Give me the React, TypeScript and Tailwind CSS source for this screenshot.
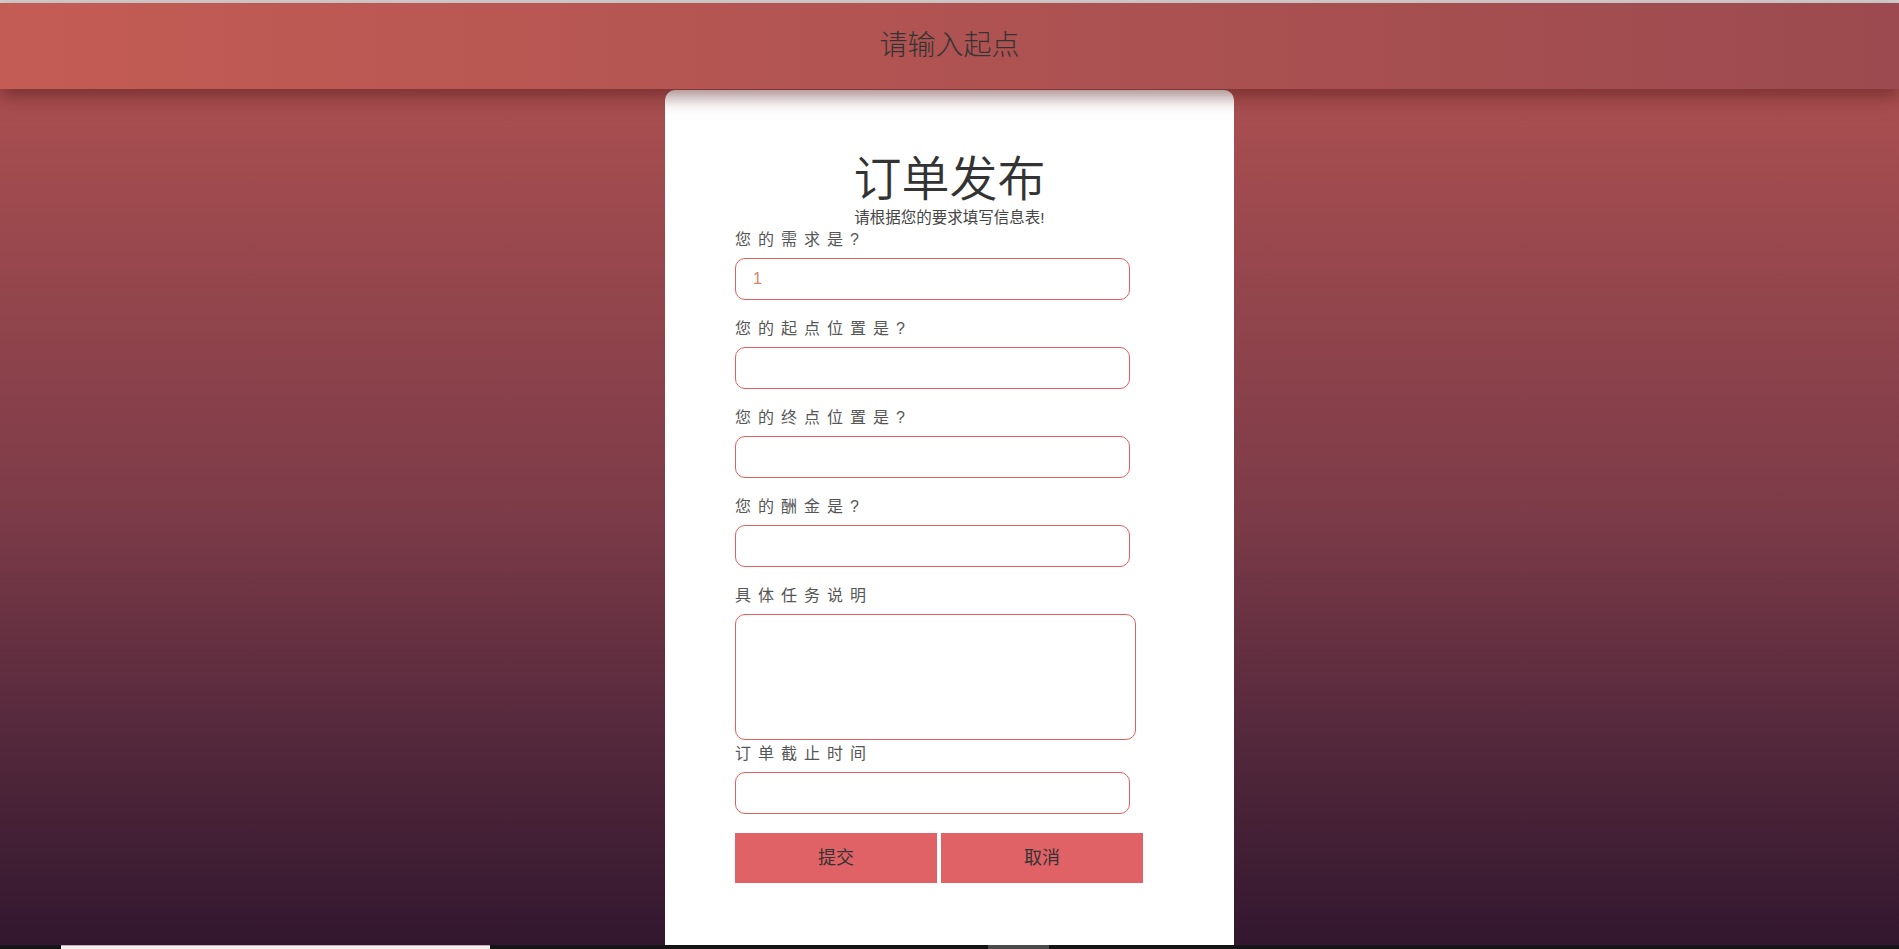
import React, { useState } from 'react';

const fontStack = { fontFamily: '"Liberation Sans", "Noto Sans CJK SC", "Noto Sans", sans-serif' };

const fields = [
  { label: '您的需求是?', value: '1' },
  { label: '您的起点位置是?', value: '' },
  { label: '您的终点位置是?', value: '' },
  { label: '您的酬金是?', value: '' },
];

const Label: React.FC<{ text: string; className?: string }> = ({ text, className = '' }) => (
  <label className={`block h-[24px] leading-[24px] text-[16px] tracking-[7px] text-[#555] ${className}`}>
    {text}
  </label>
);

const App: React.FC = () => {
  const [values, setValues] = useState(fields.map((f) => f.value));
  const [desc, setDesc] = useState('');
  const [deadline, setDeadline] = useState('');

  return (
    <div className="h-[949px] w-full flex flex-col overflow-hidden" style={fontStack}>
      <div className="h-[3px] bg-[#d4d0d0]" />

      <header className="relative z-10 h-[86px] flex items-center justify-center bg-gradient-to-r from-[#c35c54] to-[#9c4a4f] shadow-[0_8px_16px_rgba(80,20,20,0.5)]">
        <h1 className="text-[28px] font-light text-[#333]">请输入起点</h1>
      </header>

      <main className="flex-1 flex justify-center pt-[1px] bg-gradient-to-b from-[#aa4f50] via-[#7c3b48] to-[#32172f]">
        <div className="w-[569px] h-full bg-white rounded-t-[10px] px-[70px] pt-[66px]">
          <div className="text-center">
            <h2 className="text-[48px] leading-[48px] font-[350] text-[#333]">订单发布</h2>
            <p className="text-[15.5px] leading-[16px] mt-[6px] text-[#444]">请根据您的要求填写信息表!</p>
          </div>

          <form className="mt-[2px]" onSubmit={(e) => e.preventDefault()}>
            {fields.map((f, i) => (
              <div key={f.label} className={i === 0 ? '' : 'mt-[17px]'}>
                <Label text={f.label} />
                <input
                  type="text"
                  value={values[i]}
                  onChange={(e) => {
                    const next = [...values];
                    next[i] = e.target.value;
                    setValues(next);
                  }}
                  className="mt-[6px] block w-[395px] h-[42px] rounded-[10px] border border-[#e0605f] pl-[17px] text-[16px] text-[#d4836a] outline-none"
                />
              </div>
            ))}

            <div className="mt-[17px]">
              <Label text="具体任务说明" />
              <textarea
                value={desc}
                onChange={(e) => setDesc(e.target.value)}
                className="mt-[6px] block w-[401px] h-[126px] rounded-[10px] border border-[#e0605f] p-2 text-[16px] outline-none resize-none"
              />
            </div>

            <div className="mt-[2px]">
              <Label text="订单截止时间" />
              <input
                type="text"
                value={deadline}
                onChange={(e) => setDeadline(e.target.value)}
                className="mt-[6px] block w-[395px] h-[42px] rounded-[10px] border border-[#e0605f] pl-[17px] text-[16px] outline-none"
              />
            </div>

            <div className="mt-[19px] flex gap-[4px]">
              <button type="submit" className="w-[202px] h-[50px] bg-[#e06266] text-[18px] text-[#333]">
                提交
              </button>
              <button type="button" className="w-[202px] h-[50px] bg-[#e06266] text-[18px] text-[#333]">
                取消
              </button>
            </div>
          </form>
        </div>
      </main>

      <div className="h-[4px] bg-[#141414] flex">
        <div className="ml-[61px] w-[429px] bg-[#f3f1ee] border-t border-[#c9a9b4]" />
        <div className="ml-[498px] w-[61px] bg-[#4b4b4b]" />
      </div>
    </div>
  );
};

export default App;
